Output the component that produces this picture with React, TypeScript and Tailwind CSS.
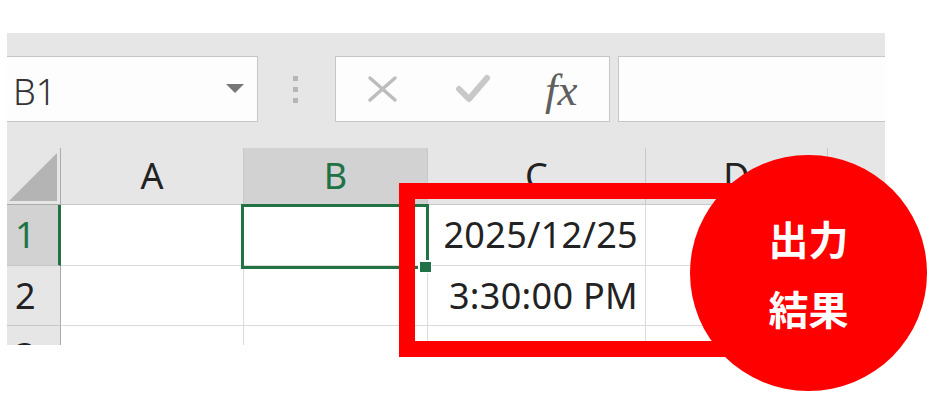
import React from "react";

const FONT = "font-['Noto_Sans',sans-serif]";

// column widths (px) incl. right grid line
const cols = [
  { key: "A", w: "w-[183px]" },
  { key: "B", w: "w-[184px]" },
  { key: "C", w: "w-[218px]" },
  { key: "D", w: "w-[182px]" },
];

const rows = [
  { n: "1", h: "h-[61px]", c: "2025/12/25" },
  { n: "2", h: "h-[60px]", c: "3:30:00 PM" },
  { n: "3", h: "h-[60px]", c: "" },
];

const App: React.FC = () => {
  return (
    <div className={`relative w-[949px] h-[400px] overflow-hidden bg-white ${FONT}`}>
      <div className="ml-[7px] mt-[33px] w-[878px] h-[312px] overflow-hidden bg-[#e6e6e6]">
        {/* Name box + formula bar */}
        <div className="flex items-start pt-[23px] h-[89px]">
          <div className="flex items-center w-[251px] h-[66px] bg-[#fdfdfd] border-y border-r border-[#c6c6c6] pl-[6px]">
            <span className="mt-[6px] text-[36px] font-light leading-none text-[#333]">B1</span>
            <svg className="ml-auto mr-[13px]" width="18" height="10" viewBox="0 0 18 10">
              <polygon points="0,0 18,0 9,9" fill="#777" />
            </svg>
          </div>
          <div className="flex flex-col gap-[6px] ml-[35px] mt-[20px]">
            <div className="w-[5px] h-[5px] bg-[#b5b5b5]" />
            <div className="w-[5px] h-[5px] bg-[#b5b5b5]" />
            <div className="w-[5px] h-[5px] bg-[#b5b5b5]" />
          </div>
          <div className="flex items-center ml-[37px] w-[275px] h-[66px] bg-[#fdfdfd] border border-[#c6c6c6]">
            <svg className="ml-[31px]" width="32" height="28" viewBox="0 0 32 28">
              <path d="M3 3 L28 25 M28 3 L3 25" stroke="#bdbdbd" strokeWidth="3.5" strokeLinecap="round" fill="none" />
            </svg>
            <svg className="ml-[56px]" width="36" height="30" viewBox="0 0 36 30">
              <path d="M4 15 L14 25 L32 4" stroke="#c8c8c8" strokeWidth="6" strokeLinecap="round" strokeLinejoin="round" fill="none" />
            </svg>
            <span className="ml-[54px] mt-[2px] font-['Liberation_Serif',serif] italic text-[45px] leading-none text-[#5f5f5f]">
              fx
            </span>
          </div>
          <div className="flex-1 ml-[8px] h-[66px] bg-[#fdfdfd] border-y border-l border-[#c6c6c6]" />
        </div>

        {/* Grid */}
        <div className="mt-[26px] flex flex-col">
          {/* column headers */}
          <div className="flex h-[57px]">
            <div className="w-[54px] h-full border-r border-b border-[#ababab] flex items-end pb-[2px] pl-[1px]">
              <svg width="50" height="50" viewBox="0 0 50 50">
                <polygon points="1,49 49,1 49,49" fill="#b4b4b4" />
              </svg>
            </div>
            {cols.map((c) => (
              <div
                key={c.key}
                className={`${c.w} h-full flex items-center justify-center border-r border-b border-[#c8c8c8] text-[36px] ${
                  c.key === "B" ? "bg-[#d2d2d2] text-[#217346] border-b-[#217346]" : "text-[#222]"
                }`}
              >
                {c.key}
              </div>
            ))}
            <div className="flex-1 h-full border-b border-[#c8c8c8]" />
          </div>

          {rows.map((r) => (
            <div key={r.n} className={`flex ${r.h}`}>
              <div
                className={`w-[54px] h-full flex items-center pl-[8px] border-b border-[#c8c8c8] text-[36px] ${
                  r.n === "1"
                    ? "bg-[#d2d2d2] text-[#217346] border-r-[3px] border-r-[#217346]"
                    : "bg-[#e6e6e6] text-[#222] border-r border-r-[#ababab]"
                }`}
              >
                {r.n}
              </div>
              {cols.map((c) => (
                <div
                  key={c.key}
                  className={`${c.w} h-full bg-white border-r border-b border-[#dadada] flex items-center justify-end pr-[7px] text-[36px] text-[#222] tracking-[0.3px]`}
                >
                  {c.key === "C" ? r.c : ""}
                </div>
              ))}
              <div className="flex-1 h-full bg-white border-b border-[#dadada]" />
            </div>
          ))}
        </div>
      </div>

      {/* selection of B1 */}
      <div className="absolute left-[241px] top-[204px] w-[188px] h-[65px] border-[3px] border-[#217346]" />
      <div className="absolute left-[418px] top-[260px] w-[14px] h-[13px] bg-white" />
      <div className="absolute left-[420px] top-[262px] w-[11px] h-[10px] bg-[#217346]" />

      {/* callout */}
      <div className="absolute left-[399px] top-[183px] w-[380px] h-[174px] border-[16px] border-[#ff0000]" />
      <div className="absolute left-[690px] top-[155px] w-[237px] h-[236px] rounded-full bg-[#ff0000] flex flex-col items-center justify-center font-['Noto_Sans_CJK_JP',sans-serif] font-bold text-white text-[40px] leading-[70px]">
        <span>出力</span>
        <span>結果</span>
      </div>
    </div>
  );
};

export default App;
